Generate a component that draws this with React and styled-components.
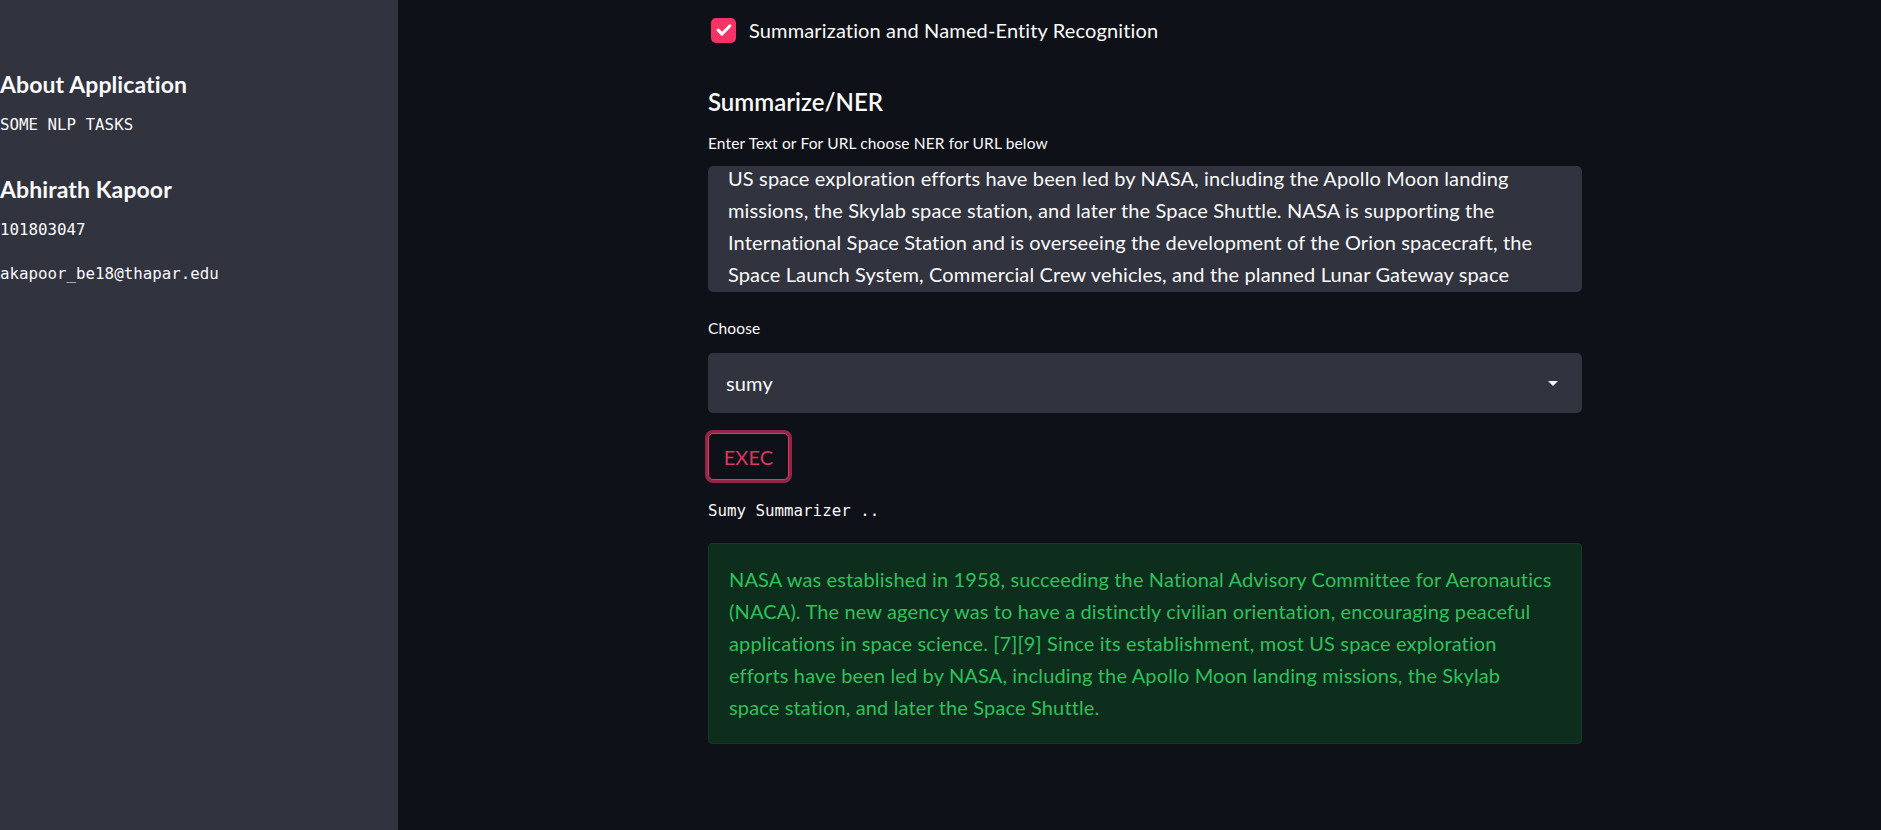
import React from "react";
import styled, { createGlobalStyle } from "styled-components";

const GlobalStyle = createGlobalStyle`
  html, body {
    margin: 0;
    padding: 0;
    background: #0e1117;
  }
  body {
    font-family: "Lato", "Roboto", sans-serif;
    color: #fafafa;
  }
`;

const Page = styled.div`
  display: flex;
  width: 1881px;
  height: 830px;
  overflow: hidden;
  background: #0e1117;
`;

const Sidebar = styled.aside`
  width: 398px;
  flex-shrink: 0;
  background: #31333f;
  padding-top: 70px;
  box-sizing: border-box;
`;

const SideTitle = styled.h2`
  margin: 0 0 ${(p) => p.gap || 17}px;
  font-size: 23px;
  line-height: 28px;
  font-weight: 700;
  letter-spacing: 0.1px;
  color: #fafafa;
`;

const MonoText = styled.p`
  margin: 0 0 ${(p) => p.gap || 0}px;
  font-family: "DejaVu Sans Mono", "Liberation Mono", monospace;
  font-size: 15.8px;
  line-height: 20px;
  color: #fafafa;
`;

const Main = styled.main`
  flex: 1;
  display: flex;
  justify-content: center;
  padding-left: 11px;
`;

const Column = styled.div`
  width: 874px;
  padding-top: 17px;
  letter-spacing: 0.14px;
`;

const CheckRow = styled.label`
  display: flex;
  align-items: center;
  gap: 13px;
  height: 26px;
  padding-left: 3px;
  font-size: 20px;
  color: #fafafa;
`;

const CheckBox = styled.span`
  width: 25px;
  height: 25px;
  border-radius: 5px;
  background: #f63366;
  display: flex;
  align-items: center;
  justify-content: center;
`;

const Heading = styled.h3`
  margin: 44px 0 0;
  font-size: 24px;
  line-height: 30px;
  font-weight: 600;
  letter-spacing: 0;
  color: #fafafa;
`;

const Label = styled.div`
  margin-top: ${(p) => p.top}px;
  font-size: 15.5px;
  line-height: 20px;
  color: #fafafa;
`;

const TextBox = styled.div`
  margin-top: 13px;
  height: 126px;
  box-sizing: border-box;
  background: #31333f;
  border-radius: 5px;
  padding: 0 20px;
  overflow: hidden;
  font-size: 20px;
  line-height: 32px;
  color: #fafafa;
`;

const Scrolled = styled.div`
  margin-top: -4px;
`;

const Line = styled.div`
  white-space: nowrap;
`;

const Select = styled.div`
  margin-top: 15px;
  height: 60px;
  background: #31333f;
  border-radius: 5px;
  display: flex;
  align-items: center;
  justify-content: space-between;
  padding: 0 24px 0 18px;
  font-size: 20px;
  color: #fafafa;
`;

const Caret = styled.span`
  width: 0;
  height: 0;
  border-left: 5px solid transparent;
  border-right: 5px solid transparent;
  border-top: 5px solid #fafafa;
`;

const ExecButton = styled.button`
  margin-top: 20px;
  width: 81px;
  height: 47px;
  background: #0e1117;
  border: 1.5px solid #e8345f;
  border-radius: 5px;
  box-shadow: 0 0 0 3px #8e2846;
  color: #e0335d;
  font-family: "Lato", "Roboto", sans-serif;
  font-size: 20px;
  letter-spacing: 0.14px;
  padding: 0;
`;

const Status = styled.p`
  margin: 21px 0 0;
  font-family: "DejaVu Sans Mono", "Liberation Mono", monospace;
  font-size: 15.8px;
  line-height: 20px;
  letter-spacing: 0;
  color: #fafafa;
`;

const Success = styled.div`
  margin-top: 22px;
  box-sizing: border-box;
  height: 201px;
  background: #0d2d1d;
  border: 1px solid #133a25;
  border-radius: 4px;
  padding: 19px 20px;
  font-size: 20px;
  line-height: 32px;
  color: #2ec25a;
`;

const inputLines = [
  "US space exploration efforts have been led by NASA, including the Apollo Moon landing",
  "missions, the Skylab space station, and later the Space Shuttle. NASA is supporting the",
  "International Space Station and is overseeing the development of the Orion spacecraft, the",
  "Space Launch System, Commercial Crew vehicles, and the planned Lunar Gateway space",
];

const summaryLines = [
  "NASA was established in 1958, succeeding the National Advisory Committee for Aeronautics",
  "(NACA). The new agency was to have a distinctly civilian orientation, encouraging peaceful",
  "applications in space science. [7][9] Since its establishment, most US space exploration",
  "efforts have been led by NASA, including the Apollo Moon landing missions, the Skylab",
  "space station, and later the Space Shuttle.",
];

export default function App() {
  return (
    <>
      <GlobalStyle />
      <Page>
        <Sidebar>
          <SideTitle>About Application</SideTitle>
          <MonoText gap={40}>SOME NLP TASKS</MonoText>
          <SideTitle>Abhirath Kapoor</SideTitle>
          <MonoText gap={24}>101803047</MonoText>
          <MonoText>akapoor_be18@thapar.edu</MonoText>
        </Sidebar>
        <Main>
          <Column>
            <CheckRow>
              <CheckBox>
                <svg width="18" height="18" viewBox="0 0 18 18">
                  <path
                    d="M3.2 9.2l3.8 3.8L14.8 5"
                    fill="none"
                    stroke="#fff"
                    strokeWidth="3.2"
                    strokeLinecap="round"
                    strokeLinejoin="round"
                  />
                </svg>
              </CheckBox>
              Summarization and Named-Entity Recognition
            </CheckRow>
            <Heading>Summarize/NER</Heading>
            <Label top={16}>Enter Text or For URL choose NER for URL below</Label>
            <TextBox>
              <Scrolled>
                {inputLines.map((l) => (
                  <Line key={l}>{l}</Line>
                ))}
              </Scrolled>
            </TextBox>
            <Label top={26}>Choose</Label>
            <Select>
              sumy
              <Caret />
            </Select>
            <ExecButton>EXEC</ExecButton>
            <Status>Sumy Summarizer ..</Status>
            <Success>
              {summaryLines.map((l) => (
                <Line key={l}>{l}</Line>
              ))}
            </Success>
          </Column>
        </Main>
      </Page>
    </>
  );
}
